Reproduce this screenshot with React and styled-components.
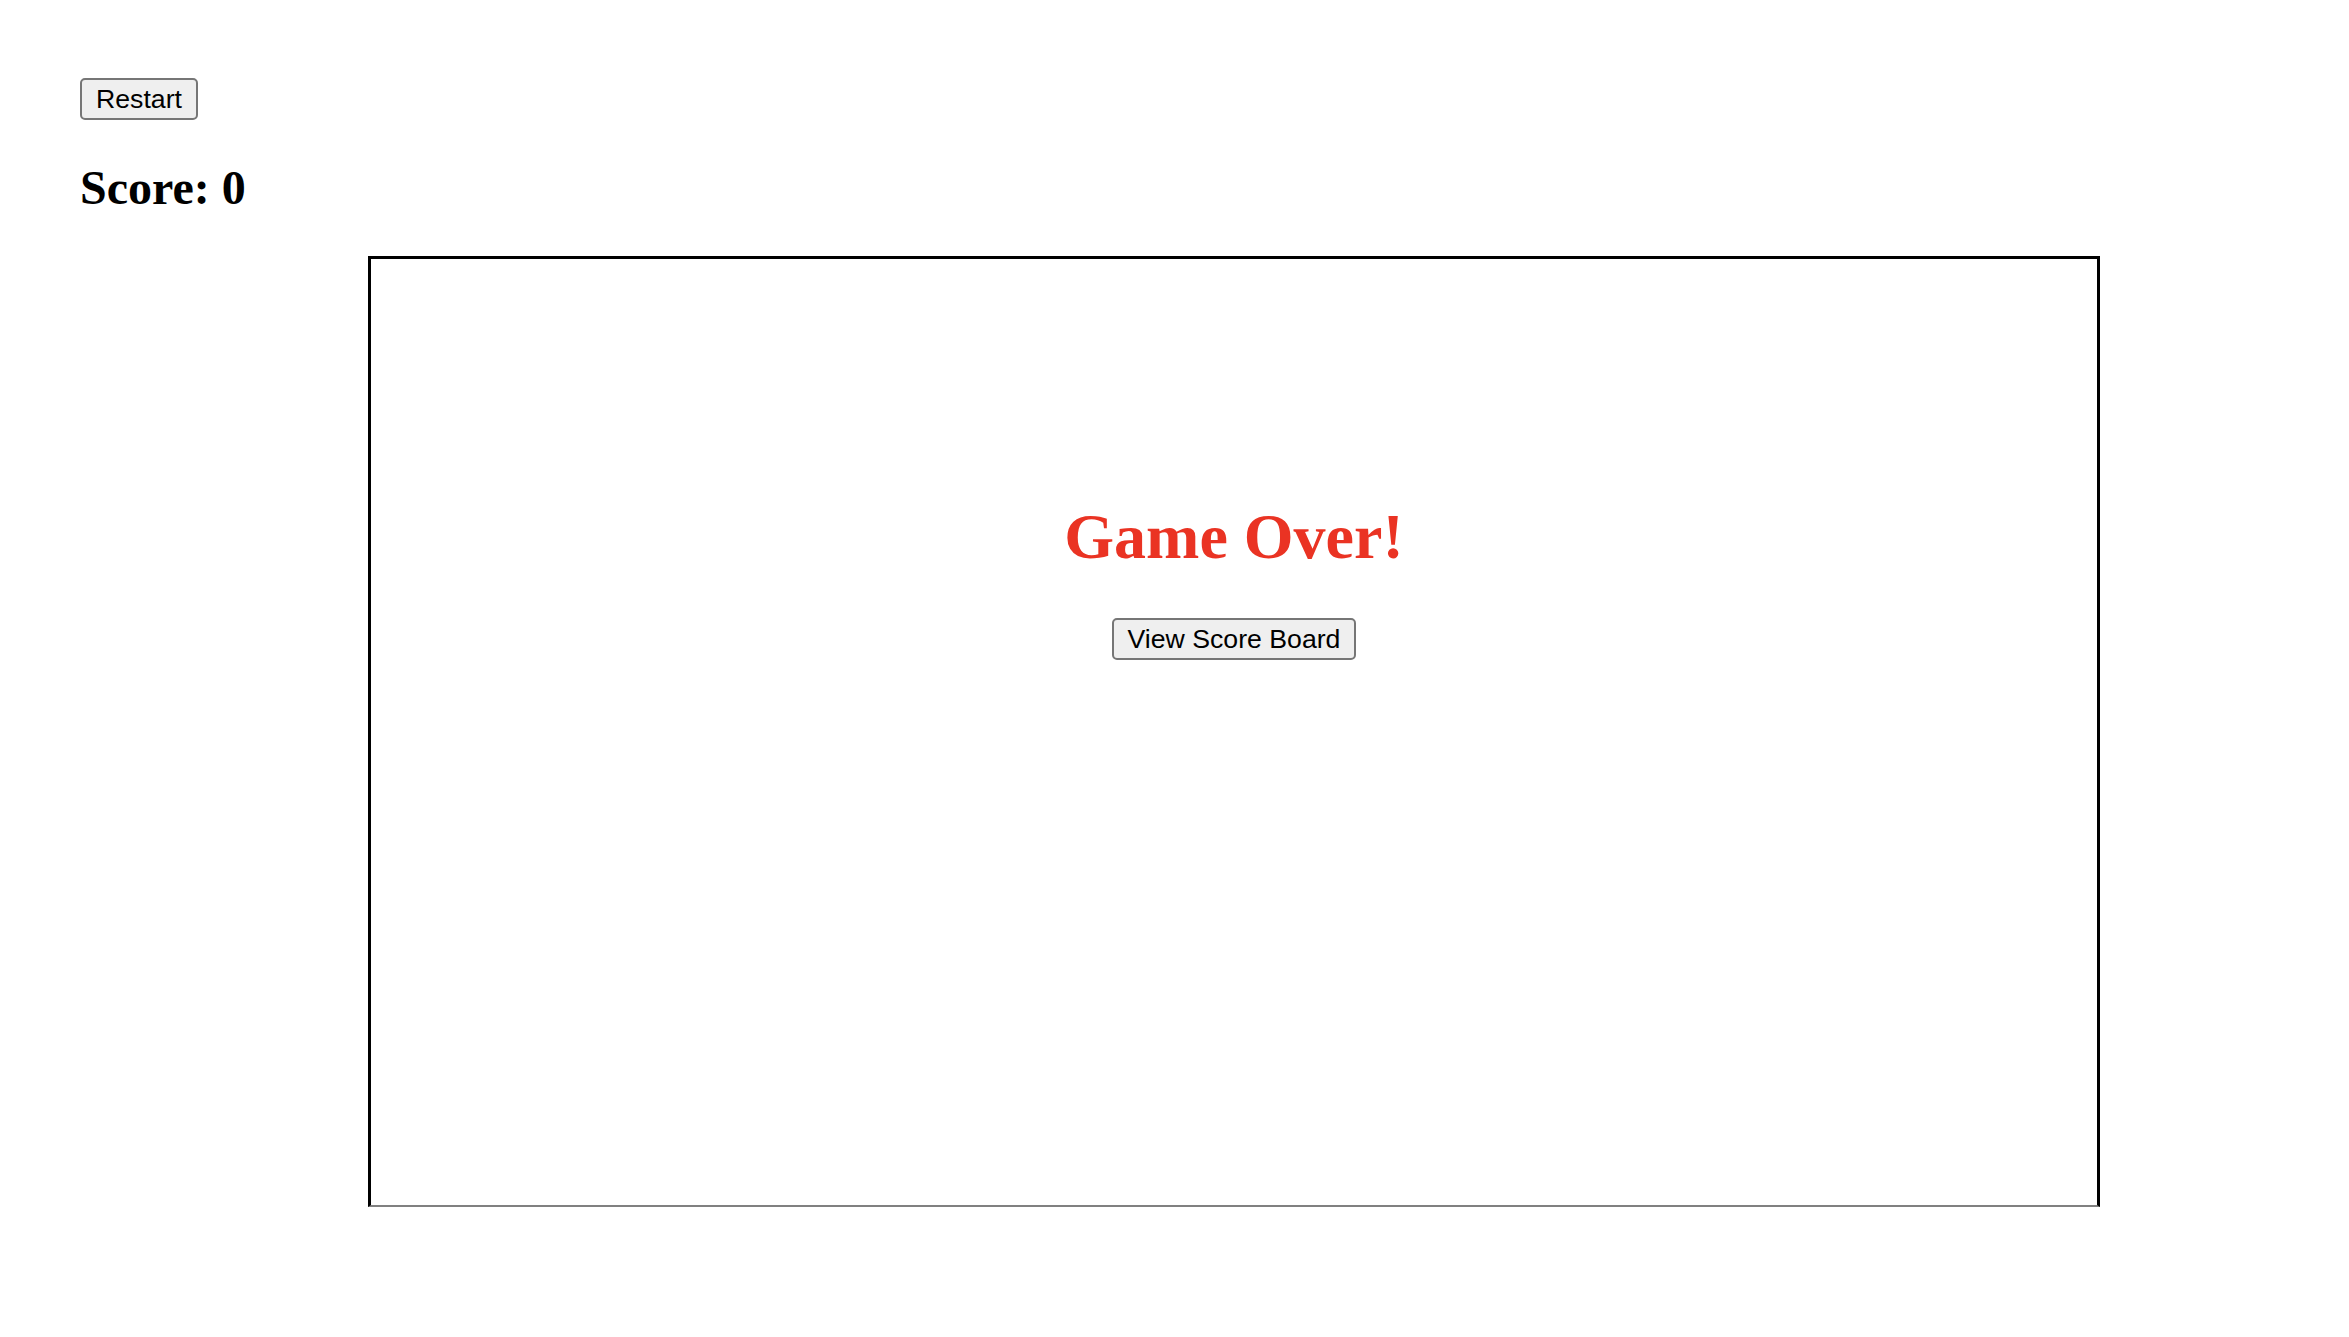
import React from 'react'
import styled, { createGlobalStyle } from 'styled-components'

const GlobalStyle = createGlobalStyle`
    html, body {
        margin: 0;
        padding: 0;
        background: #fff;
    }
    body {
        font-family: "Liberation Serif", "Times New Roman", serif;
        color: #000;
    }
`
const Page = styled.div`
    display: flex;
    flex-direction: column;
    align-items: flex-start;
    padding: 78px 0 0 80px;
`
const Button = styled.button`
    display: inline-flex;
    align-items: center;
    justify-content: center;
    box-sizing: border-box;
    height: 42px;
    padding: 0 ${props => props.pad || 14}px;
    font-family: "Liberation Sans", Arial, sans-serif;
    font-size: 26.67px;
    color: #000;
    background: #efefef;
    border: 2px solid #767676;
    border-radius: 5px;
    cursor: pointer;
`
const Score = styled.h2`
    margin: 41px 0 41px;
    font-size: 48px;
    line-height: 54px;
    font-weight: bold;
`
const Board = styled.div`
    box-sizing: border-box;
    width: 1732px;
    height: 951px;
    margin-left: 288px;
    border: 3px solid #000;
    border-bottom: 2px solid #808080;
    display: flex;
    flex-direction: column;
    align-items: center;
    padding-top: 241px;
`
const GameOver = styled.h1`
    margin: 0;
    font-size: 64px;
    line-height: 74px;
    font-weight: bold;
    color: #ea3323;
`
const ScoreButton = styled(Button)`
    margin-top: 44px;
`

const App = () => {
    return (
        <>
            <GlobalStyle />
            <Page>
                <Button pad={14}>Restart</Button>
                <Score>Score: 0</Score>
                <Board>
                    <GameOver>Game Over!</GameOver>
                    <ScoreButton pad={14}>View Score Board</ScoreButton>
                </Board>
            </Page>
        </>
    )
}

export default App
